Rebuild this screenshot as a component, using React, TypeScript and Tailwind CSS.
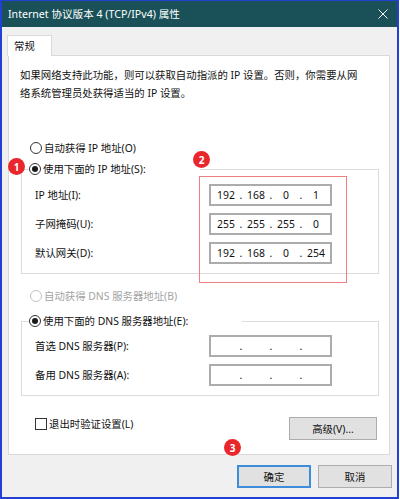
import { Fragment } from "react";

// ---------------------------------------------------------------------------
// Small pieces
// ---------------------------------------------------------------------------

function Radio({ checked, disabled }: { checked?: boolean; disabled?: boolean }) {
  return (
    <span
      className={`flex h-[12px] w-[12px] shrink-0 items-center justify-center rounded-full border bg-white ${
        disabled ? "border-[#c2c2c2]" : "border-[#333333]"
      }`}
    >
      {checked && <span className="h-[6px] w-[6px] rounded-full bg-[#1a1a1a]" />}
    </span>
  );
}

function IpField({ parts }: { parts: string[] }) {
  return (
    <div className="flex h-[22px] w-[123px] shrink-0 items-center border-2 border-[#acacac] bg-white pl-[3px]">
      {parts.map((p, i) => (
        <Fragment key={i}>
          {i > 0 && <span className="w-[6px] text-center">.</span>}
          <span className="w-[24px] text-center">{p}</span>
        </Fragment>
      ))}
    </div>
  );
}

function FieldRow({ label, parts }: { label: string; parts: string[] }) {
  return (
    <div className="flex h-[22px] items-center">
      <span className="w-[174px]">{label}</span>
      <IpField parts={parts} />
    </div>
  );
}

function Badge({ n, className }: { n: number; className: string }) {
  return (
    <span
      className={`absolute flex h-[17px] w-[17px] items-center justify-center rounded-full bg-[#e8262c] text-[10px] font-bold leading-none text-white ${className}`}
    >
      {n}
    </span>
  );
}

// ---------------------------------------------------------------------------
// Dialog
// ---------------------------------------------------------------------------

export default function App() {
  const empty = ["", "", "", ""];

  return (
    <div className="relative h-[499px] w-[400px] bg-white font-['Noto_Sans','Noto_Sans_CJK_SC',sans-serif] text-[10.4px] leading-[18px] text-[#111111]">
      <div className="flex h-[499px] w-[399px] flex-col border-x-2 border-t border-b-2 border-[#2340d6] bg-[#f0f0f0]">
        {/* Title bar */}
        <div className="flex h-[26px] shrink-0 items-center justify-between bg-[#1a5159] pl-[6px] pr-[9px] text-[10.6px] text-white">
          <span>Internet 协议版本 4 (TCP/IPv4) 属性</span>
          <svg width="10" height="10" viewBox="0 0 10 10">
            <path d="M0.5 0.5 L9.5 9.5 M9.5 0.5 L0.5 9.5" stroke="#ffffff" strokeWidth="1" />
          </svg>
        </div>

        <div className="flex flex-col pl-[6px] pr-[7px] pt-[8px] pb-[9px]">
          {/* Tab */}
          <div className="relative z-10 -mb-px -ml-px flex h-[21px] w-[45px] items-center border border-b-0 border-[#d9d9d9] bg-white pl-[6px]">
            常规
          </div>

          {/* Tab panel */}
          <div className="flex flex-col border border-[#d9d9d9] bg-white pt-[10px] pb-[14px]">
            <p className="pl-[11px]">
              如果网络支持此功能，则可以获取自动指派的 IP 设置。否则，你需要从网
              <br />
              络系统管理员处获得适当的 IP 设置。
            </p>

            <div className="mt-[37px] flex h-[18px] items-center gap-[2px] pl-[21px]">
              <Radio />
              <span>自动获得 IP 地址(O)</span>
            </div>

            <fieldset className="ml-[12px] mt-[3px] w-[358px] border border-[#dcdcdc]">
              <legend className="ml-[7px] flex h-[18px] w-[171px] items-center gap-[2px]">
                <Radio checked />
                <span>使用下面的 IP 地址(S):</span>
              </legend>
              <div className="flex flex-col gap-[7px] pl-[13px] pt-[6px] pb-[9px]">
                <FieldRow label="IP 地址(I):" parts={["192", "168", "0", "1"]} />
                <FieldRow label="子网掩码(U):" parts={["255", "255", "255", "0"]} />
                <FieldRow label="默认网关(D):" parts={["192", "168", "0", "254"]} />
              </div>
            </fieldset>

            <div className="mt-[13px] flex h-[18px] items-center gap-[2px] pl-[21px] text-[#a3a3a3]">
              <Radio disabled />
              <span>自动获得 DNS 服务器地址(B)</span>
            </div>

            <fieldset className="ml-[12px] mt-[7px] w-[358px] border border-[#dcdcdc]">
              <legend className="ml-[7px] flex h-[18px] w-[213px] items-center gap-[2px]">
                <Radio checked />
                <span>使用下面的 DNS 服务器地址(E):</span>
              </legend>
              <div className="flex flex-col gap-[7px] pl-[13px] pt-[5px] pb-[9px]">
                <FieldRow label="首选 DNS 服务器(P):" parts={empty} />
                <FieldRow label="备用 DNS 服务器(A):" parts={empty} />
              </div>
            </fieldset>

            <div className="mt-[19px] flex items-start justify-between pl-[26px] pr-[12px]">
              <div className="flex h-[18px] items-center gap-[2px]">
                <span className="h-[12px] w-[12px] border border-[#333333] bg-white" />
                <span>退出时验证设置(L)</span>
              </div>
              <button
                type="button"
                className="mt-[2px] h-[23px] w-[88px] border border-[#adadad] bg-[#e1e1e1]"
              >
                高级(V)...
              </button>
            </div>
          </div>

          {/* Dialog buttons */}
          <div className="-mr-[2px] mt-[10px] flex justify-end gap-[7px]">
            <button
              type="button"
              className="h-[23px] w-[74px] border-2 border-[#3d8ddb] bg-[#e1e1e1]"
            >
              确定
            </button>
            <button
              type="button"
              className="h-[23px] w-[74px] border border-[#adadad] bg-[#e1e1e1]"
            >
              取消
            </button>
          </div>
        </div>
      </div>

      {/* Annotations */}
      <div className="pointer-events-none absolute left-[199px] top-[176px] h-[107px] w-[148px] border border-[#ef8080]" />
      <Badge n={1} className="left-[8px] top-[158px]" />
      <Badge n={2} className="left-[193px] top-[151px]" />
      <Badge n={3} className="left-[224px] top-[439px]" />
    </div>
  );
}
